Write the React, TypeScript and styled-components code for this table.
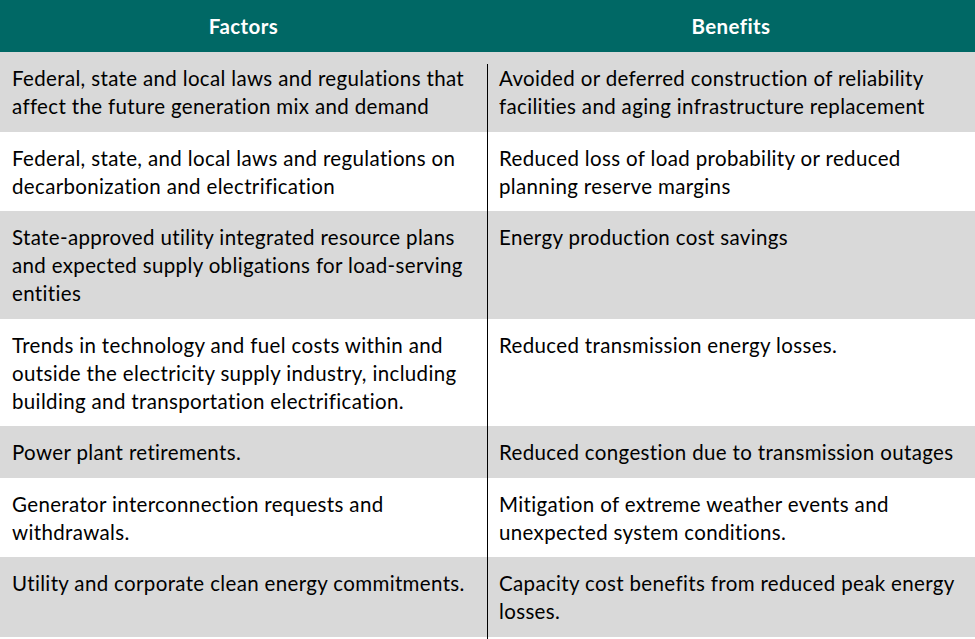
import React from 'react';
import styled, { createGlobalStyle } from 'styled-components';

const GlobalStyle = createGlobalStyle`
  html, body {
    margin: 0;
    padding: 0;
    background: #ffffff;
  }
  body {
    font-family: 'Lato', 'Liberation Sans', sans-serif;
    color: #000;
  }
`;

const Table = styled.div`
  width: 975px;
  height: 639px;
  overflow: hidden;
  display: flex;
  flex-direction: column;
`;

const Header = styled.div`
  display: grid;
  grid-template-columns: 487px 488px;
  height: 52px;
  background: #006865;
`;

const HeadCell = styled.div`
  display: flex;
  align-items: center;
  justify-content: center;
  color: #ffffff;
  font-weight: 700;
  font-size: 20.5px;
  letter-spacing: 0.4px;
`;

const Body = styled.div`
  position: relative;
  flex: 1;

  &::after {
    content: '';
    position: absolute;
    left: 487px;
    top: 12px;
    bottom: 0;
    width: 1px;
    background: #000;
  }
`;

const Row = styled.div<{ $shaded: boolean }>`
  display: grid;
  grid-template-columns: 487px 488px;
  background: ${(p) => (p.$shaded ? '#d9d9d9' : '#ffffff')};
`;

const Cell = styled.div`
  padding: 12px 12px 11.5px 12px;
  font-size: 20.5px;
  line-height: 28px;
  letter-spacing: 0.35px;
`;

const Line = styled.span`
  display: block;
  white-space: nowrap;
`;

const rows: [string[], string[]][] = [
  [
    ['Federal, state and local laws and regulations that', 'affect the future generation mix and demand'],
    ['Avoided or deferred construction of reliability', 'facilities and aging infrastructure replacement'],
  ],
  [
    ['Federal, state, and local laws and regulations on', 'decarbonization and electrification'],
    ['Reduced loss of load probability or reduced', 'planning reserve margins'],
  ],
  [
    ['State-approved utility integrated resource plans', 'and expected supply obligations for load-serving', 'entities'],
    ['Energy production cost savings'],
  ],
  [
    ['Trends in technology and fuel costs within and', 'outside the electricity supply industry, including', 'building and transportation electrification.'],
    ['Reduced transmission energy losses.'],
  ],
  [
    ['Power plant retirements.'],
    ['Reduced congestion due to transmission outages'],
  ],
  [
    ['Generator interconnection requests and', 'withdrawals.'],
    ['Mitigation of extreme weather events and', 'unexpected system conditions.'],
  ],
  [
    ['Utility and corporate clean energy commitments.'],
    ['Capacity cost benefits from reduced peak energy', 'losses.'],
  ],
];

const App: React.FC = () => {
  return (
    <>
      <GlobalStyle />
      <Table>
        <Header>
          <HeadCell>Factors</HeadCell>
          <HeadCell>Benefits</HeadCell>
        </Header>
        <Body>
          {rows.map(([factor, benefit], i) => (
            <Row key={i} $shaded={i % 2 === 0}>
              <Cell>
                {factor.map((l) => (
                  <Line key={l}>{l}</Line>
                ))}
              </Cell>
              <Cell>
                {benefit.map((l) => (
                  <Line key={l}>{l}</Line>
                ))}
              </Cell>
            </Row>
          ))}
        </Body>
      </Table>
    </>
  );
};

export default App;
